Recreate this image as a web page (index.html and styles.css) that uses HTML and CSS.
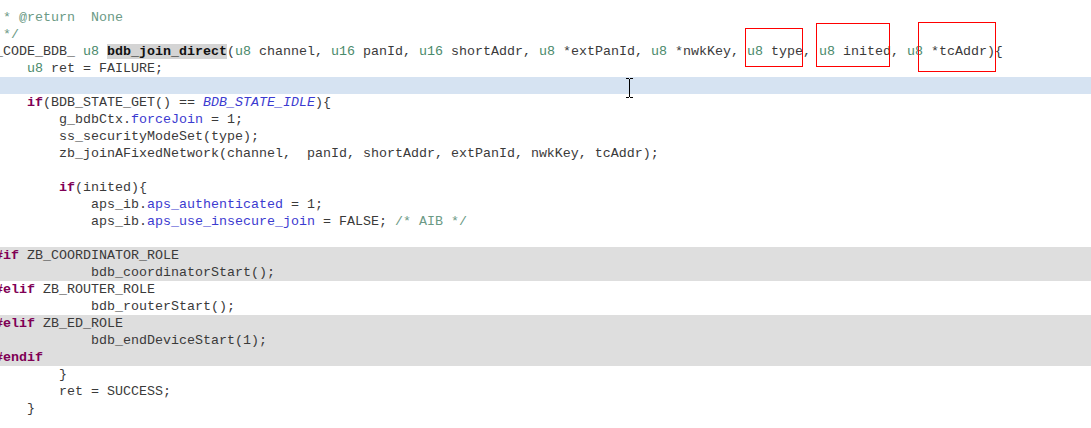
FILE: index.html
```html
<!DOCTYPE html>
<html>
<head>
<meta charset="utf-8">
<link rel="stylesheet" href="styles.css">
</head>
<body>
<div class="editor">
  <div class="code">
<div class="line"><span class="cm"> *</span></div>
<div class="line"><span class="cm"> * @return  None</span></div>
<div class="line"><span class="cm"> */</span></div>
<div class="line">_CODE_BDB_ <span class="td">u8</span> <span class="fn">bdb_join_direct</span>(<span class="td">u8</span> channel, <span class="td">u16</span> panId, <span class="td">u16</span> shortAddr, <span class="td">u8</span> *extPanId, <span class="td">u8</span> *nwkKey, <span class="td">u8</span> type, <span class="td">u8</span> inited, <span class="td">u8</span> *tcAddr){</div>
<div class="line">    <span class="td">u8</span> ret = FAILURE;</div>
<div class="line current"> </div>
<div class="line">    <span class="kw">if</span>(BDB_STATE_GET() == <span class="en">BDB_STATE_IDLE</span>){</div>
<div class="line">        g_bdbCtx.<span class="fd">forceJoin</span> = 1;</div>
<div class="line">        ss_securityModeSet(type);</div>
<div class="line">        zb_joinAFixedNetwork(channel,  panId, shortAddr, extPanId, nwkKey, tcAddr);</div>
<div class="line"> </div>
<div class="line">        <span class="kw">if</span>(inited){</div>
<div class="line">            aps_ib.<span class="fd">aps_authenticated</span> = 1;</div>
<div class="line">            aps_ib.<span class="fd">aps_use_insecure_join</span> = FALSE; <span class="cm">/* AIB */</span></div>
<div class="line"> </div>
<div class="line inactive"><span class="kw">#if</span> ZB_COORDINATOR_ROLE</div>
<div class="line inactive">            bdb_coordinatorStart();</div>
<div class="line"><span class="kw">#elif</span> ZB_ROUTER_ROLE</div>
<div class="line">            bdb_routerStart();</div>
<div class="line inactive"><span class="kw">#elif</span> ZB_ED_ROLE</div>
<div class="line inactive">            bdb_endDeviceStart(1);</div>
<div class="line inactive"><span class="kw">#endif</span></div>
<div class="line">        }</div>
<div class="line">        ret = SUCCESS;</div>
<div class="line">    }</div>
  </div>
  <div class="mark mark-type"></div>
  <div class="mark mark-inited"></div>
  <div class="mark mark-tc"></div>
  <svg class="ibeam" width="9" height="20" viewBox="0 0 9 20"><path d="M1 0.5h3M5 0.5h3M4.5 1v18M1 19.5h3M5 19.5h3" stroke="#000" stroke-width="1" fill="none"/></svg>
</div>
</body>
</html>
```
FILE: styles.css
```css
html, body {
  margin: 0;
  padding: 0;
  background: #ffffff;
  overflow: hidden;
}
.editor {
  position: relative;
  width: 1091px;
  height: 428px;
  overflow: hidden;
}
.code {
  margin-top: -8px;
  margin-left: -5px;
  font-family: "Liberation Mono", "Courier New", monospace;
  font-size: 13.33px;
  color: #3a3a3a;
}
.line {
  height: 17px;
  line-height: 17px;
  white-space: pre;
  padding-left: 0;
}
.current {
  background: #d6e3f2;
  margin-left: 5px;
}
.inactive {
  background: #dedede;
}
.cm { color: #6b9a85; }
.td { color: #4a8a6c; }
.kw { color: #7f0055; font-weight: bold; }
.fd { color: #3b3bd0; }
.en { color: #3b3bd0; font-style: italic; }
.fn {
  font-weight: bold;
  color: #111;
  background: #d4d4d4;
}
.mark {
  position: absolute;
  border: 1px solid #ff0000;
  box-sizing: border-box;
}
.mark-type { left: 745px; top: 28px; width: 58px; height: 39px; }
.mark-inited { left: 816px; top: 23px; width: 74px; height: 44px; }
.mark-tc { left: 918px; top: 22px; width: 78px; height: 50px; }
.ibeam {
  position: absolute;
  left: 625px;
  top: 78px;
}
```
